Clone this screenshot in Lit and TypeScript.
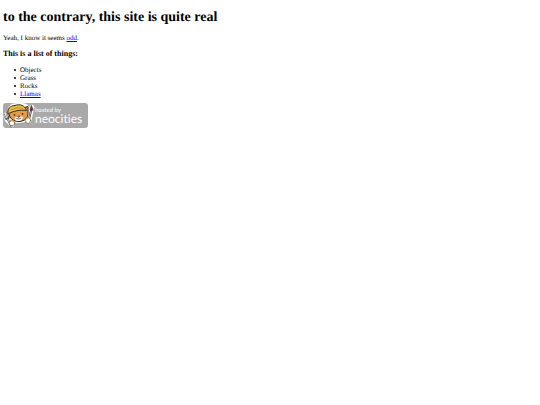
import { LitElement, html, css, svg } from "lit";
import { customElement } from "lit/decorators.js";

const cat = svg`
  <g stroke-linejoin="round" stroke-linecap="round">
    <!-- white sticker edge -->
    <path d="M6 6 L9 2 L17 1 L23 2 L26 5 L26 14 L22 18 L12 19 L7 15Z" fill="#fff" stroke="#fff" stroke-width="2.4"/>
    <path d="M2 12 L4 17 L9 22 M26 18 L29 4" stroke="#fff" stroke-width="4.5" fill="none"/>
    <!-- head -->
    <path d="M6 10 C6 15 10 18.5 16 18.5 C22 18 25 15 25 10 L25 3.5 L20 5Z" fill="#e59a48" stroke="#2a211b" stroke-width="1"/>
    <path d="M12 15 C14 13 17 12.5 20 14 C20 16 18 18 15.5 18 C13 18 11 17 12 15Z" fill="#fff"/>
    <!-- cap -->
    <path d="M5 11 C4 6 7 2.5 12 2.5 C17 0.5 22 2.5 23.5 7.5 C17 6.5 10 8 5 11Z" fill="#e3bd4d" stroke="#3c2d18" stroke-width="1"/>
    <path d="M8 7 C12 4.5 17 4.5 20 5.5" stroke="#a97c2a" stroke-width="0.7" fill="none"/>
    <!-- face -->
    <circle cx="11.5" cy="12" r="0.8" fill="#1c1714"/>
    <circle cx="19.5" cy="11" r="0.8" fill="#1c1714"/>
    <path d="M15 13.4 L17 13.1 L16 14.4Z M13.5 15.6 Q16 17 18 15.2" fill="none" stroke="#382318" stroke-width="0.7"/>
    <!-- fork -->
    <path d="M1 11.5 L2.4 15 M3.6 10.5 L4.8 14 M2.4 15 Q4.5 18 6.2 13.5 M4.5 16 L8.5 23.5" stroke="#4a4c50" stroke-width="1.8" fill="none"/>
    <path d="M1 11.5 L2.4 15 M3.6 10.5 L4.8 14 M4.5 16 L8.5 23.5" stroke="#dce2e4" stroke-width="0.9" fill="none"/>
    <!-- brush -->
    <path d="M25.5 18 L28.2 7" stroke="#2b2422" stroke-width="2"/>
    <path d="M25.5 18 L28 8" stroke="#e6cfae" stroke-width="0.9"/>
    <path d="M27.2 6.5 L28.4 2.5 L30 6.8Z" fill="#b8332c" stroke="#50201e" stroke-width="0.8"/>
    <!-- paws -->
    <ellipse cx="9" cy="20" rx="2.8" ry="2.8" fill="#fff" stroke="#6b5238" stroke-width="0.7"/>
    <ellipse cx="25" cy="17.5" rx="2.6" ry="3" fill="#fff" stroke="#6b5238" stroke-width="0.7"/>
    <path d="M7.2 18.4 Q9 16.8 11 18.4 M23.5 15.6 Q25.5 13.6 27 15.6" fill="none" stroke="#e59a48" stroke-width="1"/>
  </g>`;

@customElement("app-root")
export class AppRoot extends LitElement {
  static styles = css`
    :host {
      display: block;
      padding: 9px 3px;
      color: #000;
      background: #fff;
      font: 7px/8px "Liberation Serif", "Times New Roman", serif;
      text-rendering: geometricPrecision;
    }
    h1 {
      margin: 0 0 8px;
      font-size: 14px;
      line-height: 17px;
    }
    p {
      margin: 0 0 8px;
    }
    h2 {
      margin: 0 0 8px;
      font-size: 8px;
      line-height: 8px;
    }
    ul {
      margin: 0 0 5px;
      padding-left: 11px;
      list-style: none;
    }
    li {
      display: flex;
      align-items: center;
      gap: 4px;
    }
    li::before {
      content: "";
      width: 2px;
      height: 2px;
      border-radius: 50%;
      background: #000;
    }
    a {
      color: #0000ee;
    }
    .badge {
      display: flex;
      box-sizing: border-box;
      width: 85px;
      height: 25px;
      border-radius: 3px;
      background: #a9a9a9;
      color: #fff;
      font-family: Lato, "Noto Sans", sans-serif;
      font-variant-ligatures: none;
      text-decoration: none;
    }
    .cat {
      flex: none;
      width: 32px;
      height: 25px;
      overflow: visible;
    }
    .words {
      display: flex;
      flex-direction: column;
      padding-top: 5px;
      white-space: nowrap;
    }
    .small {
      font-size: 6px;
      line-height: 6px;
    }
    .name {
      font-size: 12px;
      line-height: 10px;
    }
  `;

  render() {
    return html`
      <main>
        <h1>to the contrary, this site is quite real</h1>
        <p>Yeah, I know it seems <a href="#odd">odd</a>.</p>
        <h2>This is a list of things:</h2>
        <ul>
          <li>Objects</li>
          <li>Grass</li>
          <li>Rocks</li>
          <li><a href="#llamas">Llamas</a></li>
        </ul>
        <a class="badge" href="#neocities">
          <svg class="cat" viewBox="0 0 32 25" aria-hidden="true">${cat}</svg>
          <span class="words">
            <span class="small">hosted by</span>
            <span class="name">neocities</span>
          </span>
        </a>
      </main>
    `;
  }
}
